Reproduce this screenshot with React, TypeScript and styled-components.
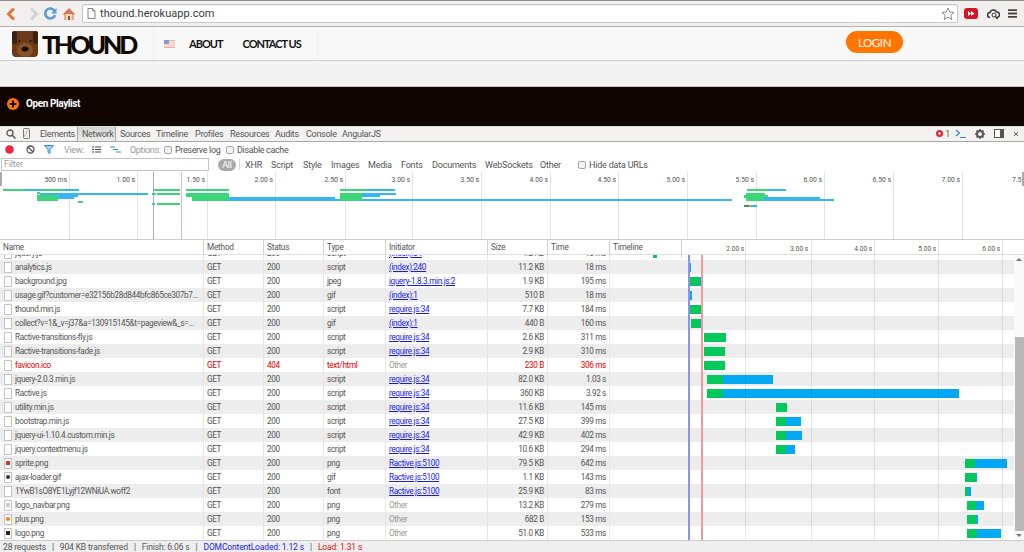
import React from "react";
import styled, { createGlobalStyle } from "styled-components";

const Global = createGlobalStyle`
  html, body { margin: 0; padding: 0; background: #fff; overflow: hidden; }
  * { box-sizing: border-box; }
  #root { width: 1024px; height: 552px; overflow: hidden; }
`;

const UI = `Roboto, "Open Sans", "Liberation Sans", sans-serif`;

const Page = styled.div`
  width: 1024px; height: 552px; display: flex; flex-direction: column; font-family: ${UI}; overflow: hidden;
`;

/* Browser chrome */
const ChromeBar = styled.header`
  height: 27px; flex: none; display: flex; align-items: center; background: #f1f0ee;
  border-top: 1px solid #8d8d8d; border-bottom: 1px solid #b4b4b4; padding: 0 0 0 6px;
`;
const ChromeButton = styled.span<{ $w: number }>`
  width: ${p => p.$w}px; flex: none; display: flex; align-items: center; justify-content: flex-start;
`;
const Omnibox = styled.div`
  width: 876px; height: 19px; margin-left: 5px; flex: none; background: #fff; border: 1px solid #c9c9c9; border-radius: 2px;
  display: flex; align-items: center; padding: 0 2px 0 4px; gap: 4px; box-shadow: inset 0 1px 1px #e6e6e6;
`;
const Url = styled.span`
  flex: 1; font: 11px Roboto, "Open Sans", sans-serif; color: #3a3a3a; letter-spacing: .05px;
`;
const ChromeRight = styled.div`
  flex: 1; display: flex; align-items: center; justify-content: space-between; padding: 0 7px 0 6px;
`;

/* Site nav */
const SiteNav = styled.nav`
  height: 34px; flex: none; background: #f8f8f8; border-bottom: 1px solid #cfcfcf; display: flex; align-items: stretch;
`;
const Brand = styled.div`
  width: 154px; flex: none; display: flex; align-items: center; padding-left: 12px; gap: 4px; border-right: 1px solid #f0f0f0;
`;
const BrandText = styled.span`
  font: 900 25px Lato, sans-serif; letter-spacing: -3.1px; color: #120804; line-height: 1; margin-top: 1px;
`;
const NavLinks = styled.div`
  width: 164px; flex: none; display: flex; align-items: center; padding-left: 10px; border-right: 1px solid #f0f0f0;
`;
const NavLink = styled.a<{ $gap: number }>`
  font: 700 11px Lato, sans-serif; letter-spacing: -1px; color: #141414; margin-left: ${p => p.$gap}px; white-space: nowrap;
`;
const LoginArea = styled.div`
  flex: 1; display: flex; align-items: center; padding-left: 528px;
`;
const LoginButton = styled.button`
  width: 57px; height: 22px; border: 0; border-radius: 11px; background: #ff7500; color: #fff; padding: 0;
  font: 400 11.5px Lato, sans-serif; letter-spacing: -.4px; margin-top: -3px;
`;
const Band = styled.div`
  height: 26px; flex: none; background: #f3f3f3; border-bottom: 1px solid #c8c8c8;
`;
const PlaylistBar = styled.div`
  height: 39px; flex: none; background: #110500; display: flex; align-items: flex-start; padding: 10px 0 0 7px; gap: 7px;
`;
const PlaylistLabel = styled.span`
  font: 700 10px/13px Roboto, "Open Sans", sans-serif; color: #fff; letter-spacing: -.4px;
`;

/* Devtools */
const TabBar = styled.div`
  height: 16px; flex: none; background: #f3f2f0; border-top: 1px solid #dcdcdc; border-bottom: 1px solid #a8a8a8;
  display: flex; align-items: center; padding: 0 0 1px 6px; font-size: 9px; letter-spacing: -.3px; color: #555;
`;
const TabIcon = styled.span<{ $w: number }>`
  width: ${p => p.$w}px; flex: none; display: flex; align-items: center;
`;
const Tab = styled.span<{ $active?: boolean; $w: number }>`
  width: ${p => p.$w}px; height: 14px; flex: none; display: flex; align-items: center; white-space: nowrap;
  ${p => p.$active ? `padding-left: 4px; margin-right: 4px; background: linear-gradient(#d4d4d4,#ececec); border-left: 1px solid #aaa; border-right: 1px solid #aaa;` : ""}
`;
const TabRight = styled.div`
  margin-left: auto; display: flex; align-items: center; gap: 5px; padding-right: 5px; color: #666;
`;
const ControlRow = styled.div`
  height: 15px; flex: none; background: #fff; display: flex; align-items: center; padding-left: 5px; font-size: 9px; letter-spacing: -.35px; color: #555;
`;
const Slot = styled.span<{ $w: number; $muted?: boolean }>`
  width: ${p => p.$w}px; flex: none; display: flex; align-items: center; gap: 3px; white-space: nowrap; color: ${p => p.$muted ? "#9a9a9a" : "inherit"};
`;
const Check = styled.i`
  width: 8px; height: 8px; flex: none; display: inline-block; border: 1px solid #a5a5a5; border-radius: 2px; background: #f4f4f4;
`;
const FilterRow = styled.div`
  height: 15px; flex: none; background: #fff; display: flex; align-items: center; padding-left: 1px; font-size: 9px; letter-spacing: -.2px; color: #555;
`;
const FilterInput = styled.div`
  width: 208px; height: 13px; flex: none; border: 1px solid #c4c4c4; color: #a0a0a0; padding-left: 2px; line-height: 11px; margin-right: 9px;
`;
const AllPill = styled.span`
  width: 18px; height: 12px; flex: none; background: #a9a9a9; color: #fff; border-radius: 6px; text-align: center; line-height: 12px; margin-right: 3px;
`;
const PillSep = styled.i`
  width: 1px; height: 11px; flex: none; background: #d8d8d8; margin-right: 5px;
`;
const Overview = styled.svg`
  display: block; flex: none; width: 1024px; height: 68px;
`;

const Table = styled.div`
  position: relative; flex: 1; min-height: 0; overflow: hidden; background: #fff;
`;
const HeadRow = styled.div`
  height: 15px; display: grid; grid-template-columns: 204px 60px 60px 62px 102px 60px 62px 72px 1fr; background: #fff; border-bottom: 1px solid #e0e0e0; font-size: 8.2px; letter-spacing: -.2px; color: #555; line-height: 14px;
`;
const HeadCell = styled.span`
  padding-left: 3px; border-right: 1px solid #d2d2d2; white-space: nowrap; overflow: hidden;
`;
const Ticks = styled.span`
  display: flex; justify-content: flex-start; font-size: 6.5px; letter-spacing: 0; color: #555; margin-left: -2px;
`;
const TickLabel = styled.span`
  width: 64px; flex: none; text-align: right; line-height: 18px; white-space: nowrap;
`;
const Rows = styled.div`
  width: 1014px; height: 285px; overflow: hidden;
`;
const Row = styled.div<{ $grey?: boolean; $err?: boolean; $clip?: boolean }>`
  height: 14px; display: grid; grid-template-columns: 204px 60px 60px 62px 102px 60px 62px 1fr; align-items: stretch; line-height: 14px; font-size: 8.2px; letter-spacing: -.35px;
  background: ${p => p.$grey ? "#ededed" : "#fff"}; color: ${p => p.$err ? "#e00000" : "#555"};
  ${p => p.$clip ? "margin-top: -9px;" : ""}
`;
const Cell = styled.span<{ $right?: boolean }>`
  padding: 0 ${p => p.$right ? 3 : 2}px 0 3px; text-align: ${p => p.$right ? "right" : "left"}; border-right: 1px solid #e6e6e6; white-space: nowrap; overflow: hidden;
`;
const NameCell = styled(Cell)`
  display: flex; align-items: center; gap: 3px; padding-left: 4px;
`;
const FileIcon = styled.span<{ $mark?: string; $round?: boolean }>`
  width: 8px; height: 11px; flex: none; border: 1px solid #c4c4c4; background: #fff; display: flex; align-items: center; justify-content: center;
  &::after { content: ""; display: ${p => p.$mark ? "block" : "none"}; width: 4px; height: 4px; background: ${p => p.$mark}; border-radius: ${p => p.$round ? "50%" : "0"}; }
`;
const Link = styled.a`
  color: #1a1aee; text-decoration: underline;
`;
const Muted = styled.span`
  color: #999;
`;
const Waterfall = styled.span`
  display: block; position: relative;
`;
const Bar = styled.span`
  display: flex; height: 9px; margin-top: 3px;
`;
const Green = styled.i`
  display: block; height: 100%; background: #03c85a;
`;
const Blue = styled.i`
  display: block; height: 100%; background: #03a9f4;
`;
const GridLine = styled.i<{ $c: string; $top: number; $w?: number }>`
  position: absolute; top: ${p => p.$top}px; bottom: 12px; width: ${p => p.$w ?? 1}px; background: ${p => p.$c};
`;
const Scrollbar = styled.div`
  position: absolute; right: 0; top: 15px; width: 10px; bottom: 12px; background: #fafafa; display: flex; flex-direction: column;
`;
const ScrollArrow = styled.i<{ $up?: boolean }>`
  display: block; width: 0; height: 0; margin: 3px auto 0; border-left: 3px solid transparent; border-right: 3px solid transparent;
  ${p => p.$up ? "border-bottom: 3px solid #777;" : "border-top: 3px solid #777;"}
`;
const ScrollThumb = styled.i`
  display: block; width: 9px; margin-left: 1px; height: 194px; background: #b8b8b8; margin-top: 76px;
`;
const Status = styled.footer`
  position: absolute; left: 0; right: 0; bottom: 0; height: 12px; background: #eee; border-top: 1px solid #ccc; display: flex; align-items: center; padding-left: 3px; gap: 6px; font-size: 8.5px; letter-spacing: -.15px; color: #555; white-space: nowrap;
`;
const StatusText = styled.span<{ $c?: string }>`
  color: ${p => p.$c ?? "inherit"};
`;

type R = { n: string; st?: string; ty: string; ini: string; link?: boolean; sz: string; t: string; mark?: string; round?: boolean; err?: boolean; b?: [number, number, number] };
const rows: R[] = [
  { n: "analytics.js", ty: "script", ini: "(index):240", link: true, sz: "11.2 KB", t: "18 ms", b: [688, 1, 2] },
  { n: "background.jpg", ty: "jpeg", ini: "jquery-1.8.3.min.js:2", link: true, sz: "1.9 KB", t: "195 ms", b: [689, 11, 3] },
  { n: "usage.gif?customer=e32156b28d844bfc865ce307b7…", ty: "gif", ini: "(index):1", link: true, sz: "510 B", t: "18 ms", b: [689, 0, 3] },
  { n: "thound.min.js", ty: "script", ini: "require.js:34", link: true, sz: "7.7 KB", t: "184 ms", b: [689, 12, 2] },
  { n: "collect?v=1&_v=j37&a=130915145&t=pageview&_s=…", ty: "gif", ini: "(index):1", link: true, sz: "440 B", t: "160 ms", b: [691, 9, 2] },
  { n: "Ractive-transitions-fly.js", ty: "script", ini: "require.js:34", link: true, sz: "2.6 KB", t: "311 ms", b: [704, 22, 0] },
  { n: "Ractive-transitions-fade.js", ty: "script", ini: "require.js:34", link: true, sz: "2.9 KB", t: "310 ms", b: [704, 21, 0] },
  { n: "favicon.ico", st: "404", ty: "text/html", ini: "Other", sz: "230 B", t: "306 ms", err: true, b: [704, 21, 0] },
  { n: "jquery-2.0.3.min.js", ty: "script", ini: "require.js:34", link: true, sz: "82.0 KB", t: "1.03 s", b: [707, 16, 50] },
  { n: "Ractive.js", ty: "script", ini: "require.js:34", link: true, sz: "360 KB", t: "3.92 s", b: [707, 16, 236] },
  { n: "utility.min.js", ty: "script", ini: "require.js:34", link: true, sz: "11.6 KB", t: "145 ms", b: [776, 11, 0] },
  { n: "bootstrap.min.js", ty: "script", ini: "require.js:34", link: true, sz: "27.5 KB", t: "399 ms", b: [776, 10, 15] },
  { n: "jquery-ui-1.10.4.custom.min.js", ty: "script", ini: "require.js:34", link: true, sz: "42.9 KB", t: "402 ms", b: [776, 10, 16] },
  { n: "jquery.contextmenu.js", ty: "script", ini: "require.js:34", link: true, sz: "10.6 KB", t: "294 ms", b: [776, 10, 9] },
  { n: "sprite.png", ty: "png", ini: "Ractive.js:5100", link: true, sz: "79.5 KB", t: "642 ms", mark: "#d8342a", b: [965, 10, 32] },
  { n: "ajax-loader.gif", ty: "gif", ini: "Ractive.js:5100", link: true, sz: "1.1 KB", t: "143 ms", mark: "#333", round: true, b: [965, 11, 1] },
  { n: "1YwB1sO8YE1Lyjf12WNiUA.woff2", ty: "font", ini: "Ractive.js:5100", link: true, sz: "25.9 KB", t: "83 ms", b: [965, 3, 3] },
  { n: "logo_navbar.png", ty: "png", ini: "Other", sz: "13.2 KB", t: "279 ms", mark: "#ccc", b: [967, 9, 8] },
  { n: "plus.png", ty: "png", ini: "Other", sz: "682 B", t: "153 ms", mark: "#ff7a10", round: true, b: [967, 9, 2] },
  { n: "logo.png", ty: "png", ini: "Other", sz: "51.0 KB", t: "533 ms", mark: "#3a2010", b: [967, 10, 24] },
];

const Gap = styled.i<{ $w: number }>`
  display: block; width: ${p => p.$w}px; flex: none;
`;

function WaterBar({ left, g, b }: { left: number; g: number; b: number }) {
  return (
    <Bar>
      <Gap $w={left - 610} />
      {g > 0 && <Green style={{ width: g }} />}
      {b > 0 && <Blue style={{ width: b }} />}
    </Bar>
  );
}

const ovG = "#3bd678";
const ovB = "#35b6f2";
const ovRects: [number, number, number, number, string][] = [
  [3, 189, 21, 2, ovG], [24, 189, 18, 2, ovB], [42, 189, 20, 2, ovG], [62, 189, 17, 2, ovB],
  [37, 192, 3, 2, ovG], [40, 193, 108, 2, ovB], [37, 195, 21, 6, ovG], [58, 195, 20, 2, ovB], [58, 197, 16, 2, ovB],
  [78, 201, 5, 2, ovG],
  [154, 189, 26, 2, ovG], [157, 193, 23, 2, ovG], [152, 193, 4, 2, ovG], [152, 203, 3, 2, ovG], [157, 203, 23, 2, ovG],
  [186, 189, 43, 2, ovG], [186, 193, 43, 4, ovG], [192, 197, 37, 4, ovG], [229, 197, 106, 4, ovB], [335, 199, 397, 2, ovB],
  [340, 189, 27, 2, ovG], [367, 189, 28, 2, ovB], [340, 193, 22, 8, ovG], [362, 193, 34, 2, ovB], [362, 195, 18, 2, ovB],
  [747, 189, 21, 2, ovG], [768, 189, 18, 2, ovB], [746, 193, 19, 2, ovG], [744, 195, 24, 3, ovG], [746, 198, 18, 3, ovG], [764, 197, 56, 2, ovB], [764, 199, 70, 2, ovB],
  [744, 205, 5, 2, "#2c9c78"], [749, 205, 2, 2, "#e0a020"], [751, 205, 6, 2, ovB],
];
const ovLines = [69, 137, 207, 275, 345, 412, 481, 550, 618, 687, 756, 824, 893, 962];
const ovLabels = ["500 ms", "1.00 s", "1.50 s", "2.00 s", "2.50 s", "3.00 s", "3.50 s", "4.00 s", "4.50 s", "5.00 s", "5.50 s", "6.00 s", "6.50 s", "7.00 s"];

export default function App() {
  return (
    <Page>
      <Global />
      <ChromeBar>
        <ChromeButton $w={23}>
          <svg width="10" height="14" viewBox="0 0 10 14"><path d="M8 1.5 2.5 7 8 12.5" fill="none" stroke="#e8743b" strokeWidth="3" /></svg>
        </ChromeButton>
        <ChromeButton $w={15}>
          <svg width="10" height="14" viewBox="0 0 10 14"><path d="M2 1.5 7.5 7 2 12.5" fill="none" stroke="#d4d4d4" strokeWidth="3" /></svg>
        </ChromeButton>
        <ChromeButton $w={18}>
          <svg width="13" height="13" viewBox="0 0 13 13"><path d="M10.5 3.8A5 5 0 1 0 11 8" fill="none" stroke="#5b9bd8" strokeWidth="2.6" /><path d="M12.5 1v5.5H7z" fill="#5b9bd8" /></svg>
        </ChromeButton>
        <ChromeButton $w={15}>
          <svg width="14" height="14" viewBox="0 0 14 14"><path d="M7 1 .5 7.5h2V13h9V7.500h2z" fill="#d9735a" /><rect x="3.500" y="7" width="7" height="6" fill="#e8d9b8" /><rect x="6" y="9" width="2" height="4" fill="#8a5a30" /></svg>
        </ChromeButton>
        <Omnibox>
          <svg width="9" height="11" viewBox="0 0 9 11"><path d="M1 .5h4.500L8 3v7.500H1zM5.500.5V3H8" fill="#fff" stroke="#888" /></svg>
          <Url>thound.herokuapp.com</Url>
          <svg width="14" height="14" viewBox="0 0 14 14"><path d="m7 1 1.800 4 4.200.4-3.200 2.800 1 4.300L7 10.200 3.200 12.500l1-4.300L1 5.400 5.200 5z" fill="#fff" stroke="#8a8a8a" /></svg>
        </Omnibox>
        <ChromeRight>
          <svg width="14" height="11" viewBox="0 0 14 11"><rect width="14" height="11" rx="3" fill="#d5142a" /><path d="M4 3v5l3-2.500zM7 3v5l3.500-2.500z" fill="#fff" /></svg>
          <svg width="13" height="12" viewBox="0 0 13 12"><path d="M3 9.500A2.500 2.500 0 0 1 3 4.500 3.500 3.500 0 0 1 9.500 4 2.700 2.700 0 0 1 10 9.500" fill="none" stroke="#333" strokeWidth="1.500" /><circle cx="7" cy="7" r="2" fill="none" stroke="#333" /><path d="m8.500 8.500 2 2.500" stroke="#333" strokeWidth="1.300" /></svg>
          <svg width="9" height="9" viewBox="0 0 9 9"><path d="M0 1.200h9M0 4.500h9M0 7.800h9" stroke="#444" strokeWidth="1.800" /></svg>
        </ChromeRight>
      </ChromeBar>

      <SiteNav>
        <Brand>
          <svg width="26" height="26" viewBox="0 0 26 26">
            <rect width="26" height="26" rx="4" fill="#6b3a18" />
            <rect x="0" y="0" width="5" height="13" rx="2" fill="#3c2110" /><rect x="21" y="0" width="5" height="13" rx="2" fill="#3c2110" />
            <ellipse cx="13" cy="19" rx="8" ry="7" fill="#8a5228" />
            <ellipse cx="13" cy="18" rx="3.500" ry="2.500" fill="#111" />
            <circle cx="7.500" cy="10" r="1" fill="#1a0d06" /><circle cx="18.500" cy="10" r="1" fill="#1a0d06" />
          </svg>
          <BrandText>THOUND</BrandText>
        </Brand>
        <NavLinks>
          <svg width="11" height="8" viewBox="0 0 11 8"><rect width="11" height="8" fill="#f0b0a8" /><path d="M0 2h11M0 4h11M0 6h11" stroke="#fff" /><rect width="5" height="4" fill="#8a98d0" /></svg>
          <NavLink $gap={14}>ABOUT</NavLink>
          <NavLink $gap={20}>CONTACT US</NavLink>
        </NavLinks>
        <LoginArea>
          <LoginButton>LOGIN</LoginButton>
        </LoginArea>
      </SiteNav>
      <Band />
      <PlaylistBar>
        <svg width="12" height="12" viewBox="0 0 12 12" style={{ marginTop: 1 }}><circle cx="6" cy="6" r="6" fill="#ff7500" /><path d="M6 2.500v7M2.500 6h7" stroke="#1a0a00" strokeWidth="2" /></svg>
        <PlaylistLabel>Open Playlist</PlaylistLabel>
      </PlaylistBar>

      <TabBar>
        <TabIcon $w={17}>
          <svg width="10" height="10" viewBox="0 0 10 10"><circle cx="4" cy="4" r="3" fill="none" stroke="#555" strokeWidth="1.300" /><path d="m6 6 3.500 3.500" stroke="#555" strokeWidth="1.500" /></svg>
        </TabIcon>
        <TabIcon $w={17}>
          <svg width="7" height="11" viewBox="0 0 7 11"><rect x=".5" y=".5" width="6" height="10" rx="1" fill="#eee" stroke="#777" /><path d="M1 9 5 2" stroke="#bbb" /></svg>
        </TabIcon>
        <Tab $w={37}>Elements</Tab>
        <Tab $active $w={39}>Network</Tab>
        <Tab $w={36}>Sources</Tab>
        <Tab $w={39}>Timeline</Tab>
        <Tab $w={35}>Profiles</Tab>
        <Tab $w={45}>Resources</Tab>
        <Tab $w={31}>Audits</Tab>
        <Tab $w={36}>Console</Tab>
        <Tab $w={50}>AngularJS</Tab>
        <TabRight>
          <svg width="7" height="7" viewBox="0 0 7 7" style={{ marginRight: -3 }}><circle cx="3.500" cy="3.500" r="3.500" fill="#e0263c" /><circle cx="3.500" cy="3.500" r="1.200" fill="#fff" /></svg>
          <span>1</span>
          <svg width="11" height="9" viewBox="0 0 11 9"><path d="m1 1 3.500 3L1 7" fill="none" stroke="#3a7fe0" strokeWidth="1.200" /><path d="M5 8.500h6" stroke="#3a7fe0" /></svg>
          <svg width="10" height="10" viewBox="0 0 10 10" style={{ marginLeft: 4 }}><circle cx="5" cy="5" r="3" fill="none" stroke="#555" strokeWidth="2" /><path d="M5 0v10M0 5h10M1.500 1.500l7 7M8.500 1.500l-7 7" stroke="#555" strokeWidth="1.500" strokeDasharray="1.600 6.800" /></svg>
          <svg width="10" height="9" viewBox="0 0 10 9" style={{ marginLeft: 4 }}><rect x=".5" y=".5" width="9" height="8" fill="#fff" stroke="#555" /><rect x="6" y="1" width="3" height="7" fill="#555" /></svg>
          <svg width="6" height="6" viewBox="0 0 6 6" style={{ marginLeft: 4 }}><path d="m1 1 4 4M5 1 1 5" stroke="#666" /></svg>
        </TabRight>
      </TabBar>

      <ControlRow>
        <Slot $w={21}>
          <svg width="9" height="9" viewBox="0 0 9 9"><circle cx="4.500" cy="4.500" r="4.300" fill="#e8283c" /></svg>
        </Slot>
        <Slot $w={18}>
          <svg width="9" height="9" viewBox="0 0 9 9"><circle cx="4.500" cy="4.500" r="3.500" fill="none" stroke="#555" strokeWidth="1.300" /><path d="m2 2 5 5" stroke="#555" strokeWidth="1.300" /></svg>
        </Slot>
        <Slot $w={20}>
          <svg width="10" height="9" viewBox="0 0 10 9"><path d="M.5.500h9L6 4.500V8.500L4 7.500v-3z" fill="#a8d0f5" stroke="#3a88e0" /></svg>
        </Slot>
        <Slot $w={28} $muted>View:</Slot>
        <Slot $w={18}>
          <svg width="9" height="7" viewBox="0 0 9 7"><path d="M0 1h2M3 1h6M0 3.500h2M3 3.500h6M0 6h2M3 6h6" stroke="#444" strokeWidth="1.200" /></svg>
        </Slot>
        <Slot $w={20}>
          <svg width="11" height="7" viewBox="0 0 11 7"><path d="M0 1h5M3 3.500h5M6 6h5" stroke="#3a88e0" strokeWidth="1.200" /></svg>
        </Slot>
        <Slot $w={34} $muted>Options:</Slot>
        <Slot $w={62}><Check />Preserve log</Slot>
        <Slot $w={70}><Check />Disable cache</Slot>
      </ControlRow>

      <FilterRow>
        <FilterInput>Filter</FilterInput>
        <AllPill>All</AllPill>
        <PillSep />
        <Slot $w={26}>XHR</Slot>
        <Slot $w={32}>Script</Slot>
        <Slot $w={28}>Style</Slot>
        <Slot $w={37}>Images</Slot>
        <Slot $w={33}>Media</Slot>
        <Slot $w={31}>Fonts</Slot>
        <Slot $w={53}>Documents</Slot>
        <Slot $w={55}>WebSockets</Slot>
        <Slot $w={38}>Other</Slot>
        <Slot $w={90}><Check />Hide data URLs</Slot>
      </FilterRow>

      <Overview viewBox="0 172 1024 68">
        {ovLines.map(x => <rect key={x} x={x} y="172" width="1" height="67" fill="#e4e4e4" />)}
        <rect x="153" y="172" width="1" height="67" fill="#a6a6ee" />
        <rect x="181" y="172" width="1" height="67" fill="#f0b4b4" />
        {ovRects.map(([x, y, w, h, c], i) => <rect key={i} x={x} y={y} width={w} height={h} fill={c} />)}
        {ovLabels.map((l, i) => (
          <text key={l} x={ovLines[i] - 2} y="182" textAnchor="end" fontSize="6.800" fill="#555" fontFamily={UI}>{l}</text>
        ))}
        <text x="1012" y="182" fontSize="6.800" fill="#555" fontFamily={UI}>7.5</text>
        <rect x="0" y="172" width="2" height="14" fill="#aaa" />
        <rect x="1022" y="172" width="2" height="14" fill="#aaa" />
        <rect x="0" y="239" width="1024" height="1" fill="#cfcfcf" />
      </Overview>

      <Table>
        <HeadRow>
          <HeadCell>Name</HeadCell>
          <HeadCell>Method</HeadCell>
          <HeadCell>Status</HeadCell>
          <HeadCell>Type</HeadCell>
          <HeadCell>Initiator</HeadCell>
          <HeadCell>Size</HeadCell>
          <HeadCell>Time</HeadCell>
          <HeadCell>Timeline</HeadCell>
          <Ticks>
            {["2.00 s", "3.00 s", "4.00 s", "5.00 s", "6.00 s"].map(t => <TickLabel key={t}>{t}</TickLabel>)}
          </Ticks>
        </HeadRow>
        <Rows>
          <Row $clip>
            <NameCell><FileIcon /><span>jquery.js</span></NameCell>
            <Cell>GET</Cell>
            <Cell>200</Cell>
            <Cell>script</Cell>
            <Cell><Link>(index):34</Link></Cell>
            <Cell $right>1.2 KB</Cell>
            <Cell $right>18 ms</Cell>
            <Waterfall><Bar><Gap $w={43} /><Green style={{ width: 2 }} /><Blue style={{ width: 2 }} /></Bar></Waterfall>
          </Row>
          {rows.map((r, i) => (
            <Row key={r.n} $grey={i % 2 === 0} $err={r.err}>
              <NameCell><FileIcon $mark={r.mark} $round={r.round} /><span>{r.n}</span></NameCell>
              <Cell>GET</Cell>
              <Cell>{r.st ?? "200"}</Cell>
              <Cell>{r.ty}</Cell>
              <Cell>{r.link ? <Link>{r.ini}</Link> : <Muted>{r.ini}</Muted>}</Cell>
              <Cell $right>{r.sz}</Cell>
              <Cell $right>{r.t}</Cell>
              <Waterfall>{r.b && <WaterBar left={r.b[0]} g={r.b[1]} b={r.b[2]} />}</Waterfall>
            </Row>
          ))}
        </Rows>
        {[745, 811, 874, 938, 1002].map(x => <GridLine key={x} $c="rgba(0,0,0,.09)" $top={0} style={{ left: x }} />)}
        <GridLine $c="#9090ee" $top={15} $w={2} style={{ left: 688 }} />
        <GridLine $c="#f29a9a" $top={15} $w={2} style={{ left: 701 }} />
        <Scrollbar>
          <ScrollArrow $up />
          <ScrollThumb />
          <ScrollArrow />
        </Scrollbar>
        <Status>
          <StatusText>28 requests</StatusText>
          <StatusText>|</StatusText>
          <StatusText>904 KB transferred</StatusText>
          <StatusText>|</StatusText>
          <StatusText>Finish: 6.06 s</StatusText>
          <StatusText>|</StatusText>
          <StatusText $c="#1a1aee">DOMContentLoaded: 1.12 s</StatusText>
          <StatusText>|</StatusText>
          <StatusText $c="#e01010">Load: 1.31 s</StatusText>
        </Status>
      </Table>
    </Page>
  );
}
